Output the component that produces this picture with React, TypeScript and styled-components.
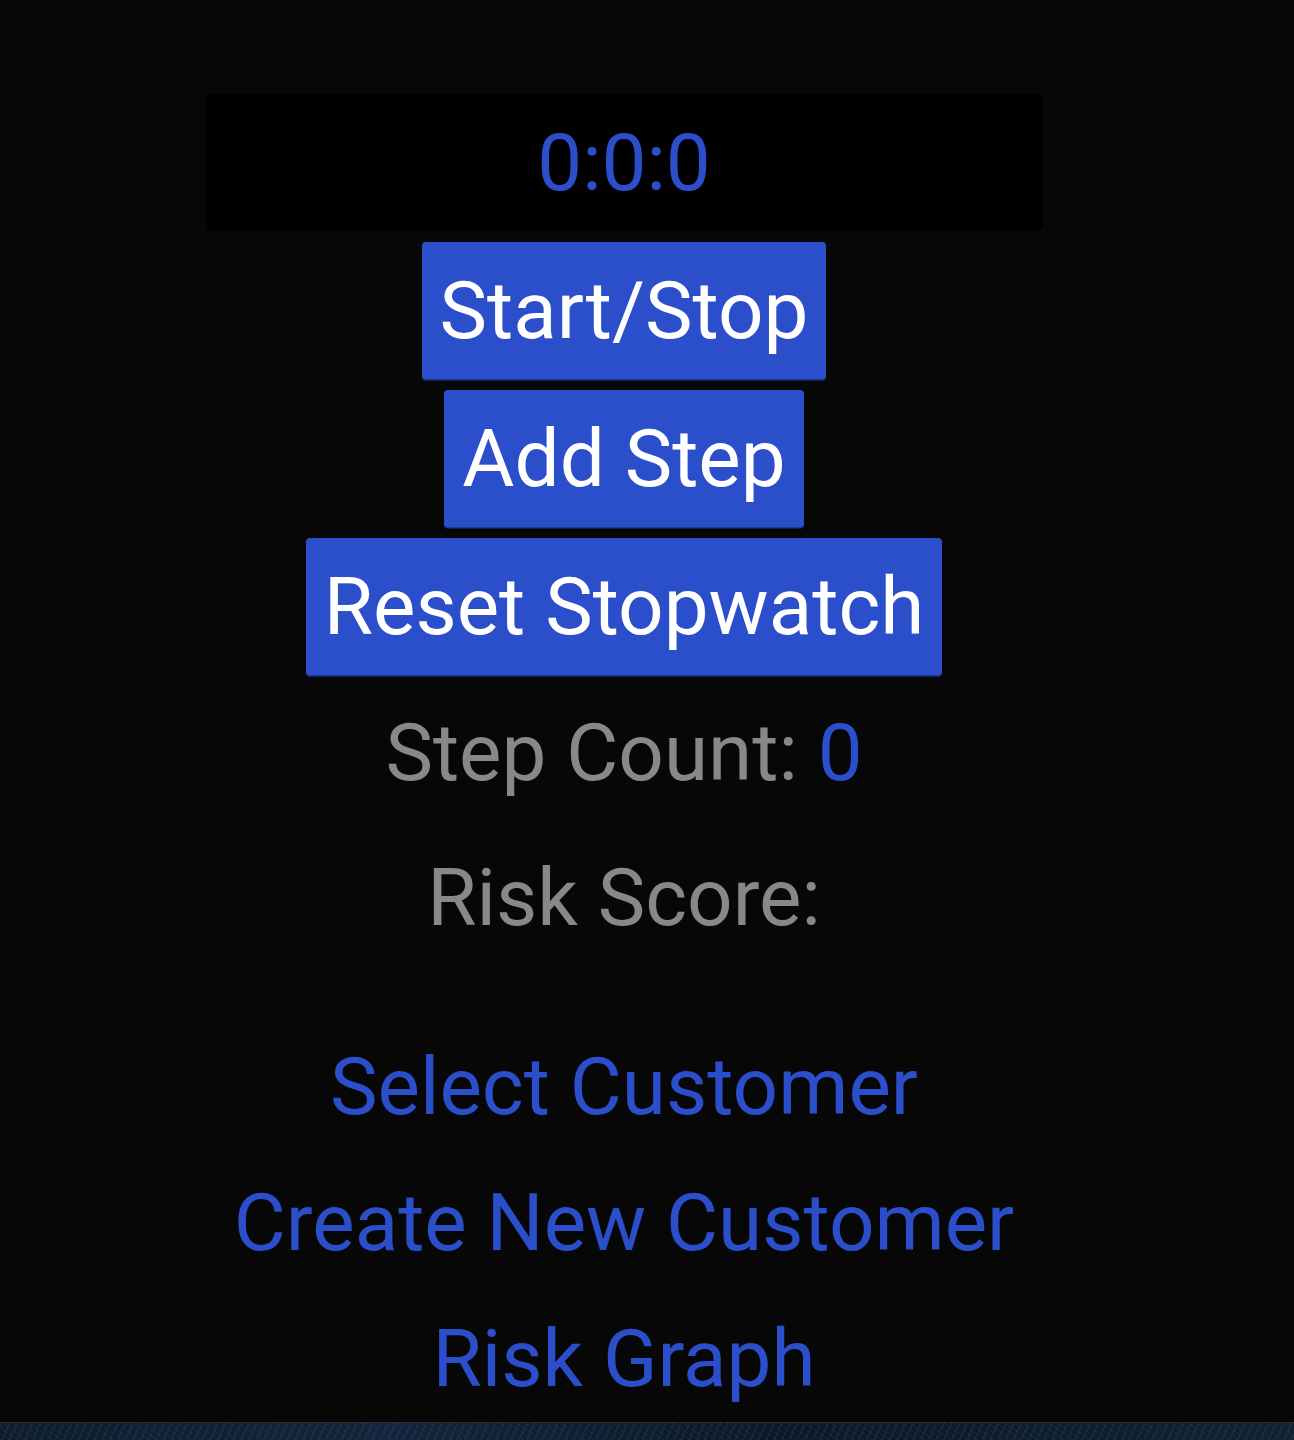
import React from "react";
import styled, { createGlobalStyle } from "styled-components";

const GlobalStyle = createGlobalStyle`
  html, body {
    margin: 0;
    padding: 0;
  }
  body {
    min-height: 1440px;
    font-family: Roboto, "Liberation Sans", sans-serif;
    background-color: #0d1a26;
    background-image:
      repeating-linear-gradient(115deg, rgba(60, 90, 120, 0.18) 0px, rgba(60, 90, 120, 0.18) 2px, transparent 2px, transparent 7px),
      repeating-linear-gradient(35deg, rgba(30, 55, 80, 0.35) 0px, rgba(30, 55, 80, 0.35) 1px, transparent 1px, transparent 5px),
      linear-gradient(90deg, #0e1c2a, #12243a 30%, #0b1824 60%, #11212f);
  }
`;

const Panel = styled.main`
  background: #070707;
  border-bottom: 1px solid #2a2d30;
  display: flex;
  flex-direction: column;
  align-items: center;
  padding: 94px 46px 16px 0;
`;

const TimerBox = styled.div`
  width: 837px;
  box-sizing: border-box;
  background: #000;
  border-radius: 5px;
  padding: 22px 0 21px;
  text-align: center;
  font-size: 80px;
  line-height: 94px;
  color: #2b4fcb;
`;

const ButtonStack = styled.div`
  display: flex;
  flex-direction: column;
  align-items: center;
  gap: 11px;
  margin-top: 11px;
`;

const ActionButton = styled.button`
  font-family: Roboto, "Liberation Sans", sans-serif;
  font-size: 80px;
  line-height: 94px;
  color: #fff;
  background: #2b4fca;
  border: none;
  border-radius: 4px;
  box-shadow: 0 1.5px 0 #1f3b98;
  padding: 21.5px 18px;
  cursor: pointer;
`;

const Stat = styled.p<{ $top: number }>`
  margin: ${(p) => p.$top}px 0 0;
  font-size: 80px;
  line-height: 94px;
  color: #888;
  text-align: center;
`;

const Value = styled.span`
  color: #2b4fcb;
`;

const NavList = styled.nav`
  display: flex;
  flex-direction: column;
  align-items: center;
  gap: 42px;
  margin-top: 95px;
`;

const NavLink = styled.a`
  font-size: 80px;
  line-height: 94px;
  color: #2b4fcb;
  text-decoration: none;
  cursor: pointer;
`;

export default function App() {
  return (
    <>
      <GlobalStyle />
      <Panel>
        <TimerBox>0:0:0</TimerBox>
        <ButtonStack>
          <ActionButton>Start/Stop</ActionButton>
          <ActionButton>Add Step</ActionButton>
          <ActionButton>Reset Stopwatch</ActionButton>
        </ButtonStack>
        <Stat $top={31}>
          Step Count: <Value>0</Value>
        </Stat>
        <Stat $top={51}>Risk Score:</Stat>
        <NavList>
          <NavLink>Select Customer</NavLink>
          <NavLink>Create New Customer</NavLink>
          <NavLink>Risk Graph</NavLink>
        </NavList>
      </Panel>
    </>
  );
}
